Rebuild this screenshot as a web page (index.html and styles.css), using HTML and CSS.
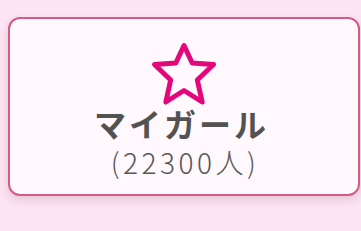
FILE: index.html
```html
<!DOCTYPE html>
<html lang="ja">
<head>
<meta charset="utf-8">
<link rel="stylesheet" href="styles.css">
</head>
<body>
<div class="card">
  <svg class="star" viewBox="150 40 70 70" width="70" height="70">
    <polygon points="185,45.5 193.2,63 214.5,64.5 198.3,80 203.2,102 185,90.5 166.8,102 171.7,80 155.5,64.5 176.8,63" fill="none" stroke="#e2087c" stroke-width="5" stroke-linejoin="round"/>
  </svg>
  <div class="title">マイガール</div>
  <div class="count">(22300人)</div>
</div>
</body>
</html>
```
FILE: styles.css
```css
html, body {
  margin: 0;
  padding: 0;
}
body {
  background: #fce4f3;
  width: 361px;
  height: 231px;
  overflow: hidden;
  font-family: "Noto Sans CJK JP", "Noto Sans", sans-serif;
}
.card {
  margin: 17px 0 0 8px;
  width: 352px;
  height: 179px;
  box-sizing: border-box;
  border: 2px solid #d65a82;
  border-radius: 12px;
  background: #fff8fc;
  box-shadow: 0 4px 8px rgba(120, 60, 90, 0.18);
  display: flex;
  flex-direction: column;
  align-items: center;
  padding-top: 21px;
}
.star {
  display: block;
}
.title {
  font-size: 32px;
  font-weight: 700;
  line-height: 32px;
  color: #525252;
  letter-spacing: 3px;
  margin-top: -3px;
  padding-right: 5px;
}
.count {
  font-size: 28px;
  font-weight: 300;
  line-height: 28px;
  color: #575757;
  letter-spacing: 3.5px;
  margin-top: 9px;
  padding-left: 2px;
}
```
